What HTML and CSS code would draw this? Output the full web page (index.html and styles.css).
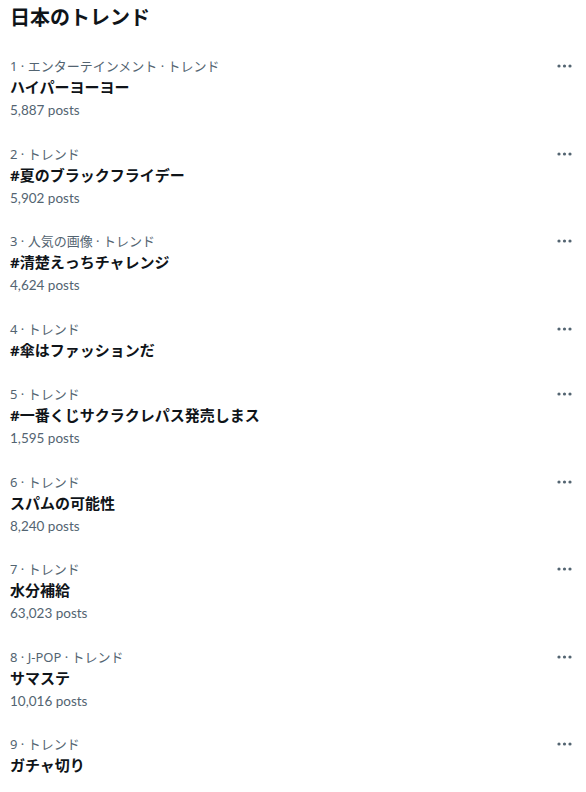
FILE: index.html
```html
<!DOCTYPE html>
<html lang="ja">
<head>
    <meta charset="UTF-8">
    <title>日本のトレンド</title>
    <link rel="stylesheet" href="styles.css">
</head>
<body>
<div id="trends">
    <h2 class="trends-title">日本のトレンド</h2>

    <div class="trend">
        <div class="trend-text">
            <div class="trend-meta">1 · エンターテインメント · トレンド</div>
            <div class="trend-name">ハイパーヨーヨー</div>
            <div class="trend-count">5,887 posts</div>
        </div>
        <svg class="trend-more" viewBox="0 0 16 4"><circle cx="2" cy="2" r="1.6"/><circle cx="7.5" cy="2" r="1.6"/><circle cx="13" cy="2" r="1.6"/></svg>
    </div>
    <div class="trend">
        <div class="trend-text">
            <div class="trend-meta">2 · トレンド</div>
            <div class="trend-name">#夏のブラックフライデー</div>
            <div class="trend-count">5,902 posts</div>
        </div>
        <svg class="trend-more" viewBox="0 0 16 4"><circle cx="2" cy="2" r="1.6"/><circle cx="7.5" cy="2" r="1.6"/><circle cx="13" cy="2" r="1.6"/></svg>
    </div>
    <div class="trend">
        <div class="trend-text">
            <div class="trend-meta">3 · 人気の画像 · トレンド</div>
            <div class="trend-name">#清楚えっちチャレンジ</div>
            <div class="trend-count">4,624 posts</div>
        </div>
        <svg class="trend-more" viewBox="0 0 16 4"><circle cx="2" cy="2" r="1.6"/><circle cx="7.5" cy="2" r="1.6"/><circle cx="13" cy="2" r="1.6"/></svg>
    </div>
    <div class="trend">
        <div class="trend-text">
            <div class="trend-meta">4 · トレンド</div>
            <div class="trend-name">#傘はファッションだ</div>
        </div>
        <svg class="trend-more" viewBox="0 0 16 4"><circle cx="2" cy="2" r="1.6"/><circle cx="7.5" cy="2" r="1.6"/><circle cx="13" cy="2" r="1.6"/></svg>
    </div>
    <div class="trend">
        <div class="trend-text">
            <div class="trend-meta">5 · トレンド</div>
            <div class="trend-name">#一番くじサクラクレパス発売しまス</div>
            <div class="trend-count">1,595 posts</div>
        </div>
        <svg class="trend-more" viewBox="0 0 16 4"><circle cx="2" cy="2" r="1.6"/><circle cx="7.5" cy="2" r="1.6"/><circle cx="13" cy="2" r="1.6"/></svg>
    </div>
    <div class="trend">
        <div class="trend-text">
            <div class="trend-meta">6 · トレンド</div>
            <div class="trend-name">スパムの可能性</div>
            <div class="trend-count">8,240 posts</div>
        </div>
        <svg class="trend-more" viewBox="0 0 16 4"><circle cx="2" cy="2" r="1.6"/><circle cx="7.5" cy="2" r="1.6"/><circle cx="13" cy="2" r="1.6"/></svg>
    </div>
    <div class="trend">
        <div class="trend-text">
            <div class="trend-meta">7 · トレンド</div>
            <div class="trend-name">水分補給</div>
            <div class="trend-count">63,023 posts</div>
        </div>
        <svg class="trend-more" viewBox="0 0 16 4"><circle cx="2" cy="2" r="1.6"/><circle cx="7.5" cy="2" r="1.6"/><circle cx="13" cy="2" r="1.6"/></svg>
    </div>
    <div class="trend">
        <div class="trend-text">
            <div class="trend-meta">8 · J-POP · トレンド</div>
            <div class="trend-name">サマステ</div>
            <div class="trend-count">10,016 posts</div>
        </div>
        <svg class="trend-more" viewBox="0 0 16 4"><circle cx="2" cy="2" r="1.6"/><circle cx="7.5" cy="2" r="1.6"/><circle cx="13" cy="2" r="1.6"/></svg>
    </div>
    <div class="trend">
        <div class="trend-text">
            <div class="trend-meta">9 · トレンド</div>
            <div class="trend-name">ガチャ切り</div>
        </div>
        <svg class="trend-more" viewBox="0 0 16 4"><circle cx="2" cy="2" r="1.6"/><circle cx="7.5" cy="2" r="1.6"/><circle cx="13" cy="2" r="1.6"/></svg>
    </div>
</div>
</body>
</html>
```
FILE: styles.css
```css
body, html {
    margin: 0;
    background: #fff;
    overflow: hidden;
}

#trends {
    font-family: "Noto Sans", "Noto Sans CJK JP", sans-serif;
    color: #0f1419;
    padding: 0 10px;
}

.trends-title {
    margin: 0;
    padding: 4px 0 12px;
    font-size: 20px;
    line-height: 28px;
    font-weight: 700;
}

/* One row per trend */
.trend {
    display: flex;
    justify-content: space-between;
    align-items: flex-start;
    padding: 12px 0 11.5px;
}

.trend-meta, .trend-count {
    font-size: 13px;
    line-height: 20px;
    color: #536471;
}

.trend-count {
    font-family: Lato, "Noto Sans", sans-serif;
    font-size: 13.5px;
    margin-top: 2px;
}

.trend-name {
    font-size: 15px;
    line-height: 22px;
    font-weight: 700;
}

.trend-more {
    width: 16px;
    height: 4px;
    margin: 8px 3px 0 0;
    fill: #536471;
}
```
